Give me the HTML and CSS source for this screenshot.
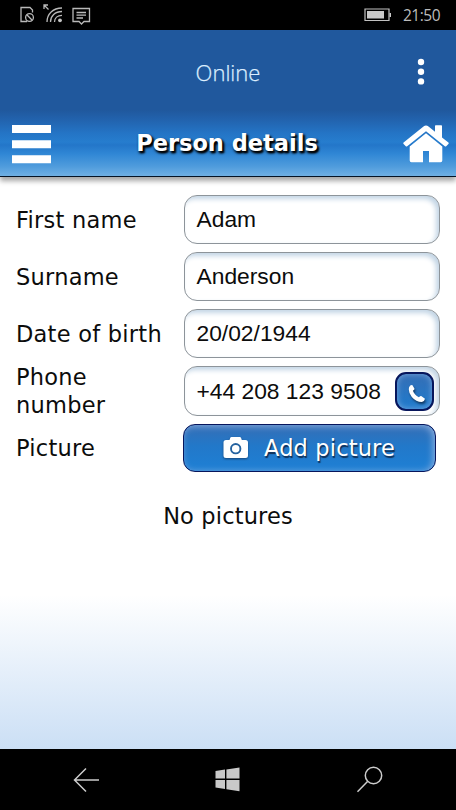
FILE: index.html
```html
<!DOCTYPE html>
<html lang="en">
<head>
<meta charset="utf-8">
<title>Person details</title>
<link rel="stylesheet" href="styles.css">
</head>
<body>
<div class="status">
  <svg class="status-icons" width="80" height="30" viewBox="0 0 80 30" fill="none" stroke="#b9b9b9" stroke-width="1.3">
    <path d="M7 21.500H1V7.500H10L12.500 10V12.500"/>
    <circle cx="9.500" cy="17.500" r="3.900"/><path d="M6.800 14.800L12.200 20.200"/>
    <path d="M24 9V5H28M24 5L28.500 9.500"/>
    <path d="M27 22C27 14 33 8 42 8M30.500 22C30.500 16 35 11.500 42 11.500M34.500 22C34.500 18 37.500 15.300 42 15.300"/>
    <circle cx="40" cy="20.300" r="1.900" fill="#c4c4c4" stroke="none"/>
    <path d="M53 8.500H69.500V21.500H64L61.500 24L59 21.500H53ZM56.500 12.500H66M56.500 15.200H66M56.500 18H63"/>
  </svg>
  <svg class="battery" width="28" height="14" viewBox="0 0 28 14"><path d="M1 1H25V12.500H1Z" fill="none" stroke="#c2c2c2" stroke-width="1.200"/><path d="M3 3H20V10.500H3ZM25.500 5H27V9H25.500Z" fill="#c9c9c9"/></svg>
  <span class="clock">21:50</span>
</div>
<header class="banner">
  <div class="online-row">
    <span class="online">Online</span>
    <svg class="dots" width="8" height="28" viewBox="0 0 8 28" fill="#fff"><circle cx="4" cy="4" r="3.200"/><circle cx="4" cy="13.700" r="3.200"/><circle cx="4" cy="23.400" r="3.200"/></svg>
  </div>
  <div class="title-row">
    <svg class="menu" width="39" height="39" viewBox="0 0 39 39" fill="#fff"><path d="M0 0H39V8H0ZM0 15.300H39V23.200H0ZM0 30.300H39V38.300H0Z"/></svg>
    <h1 class="title">Person details</h1>
    <svg class="home" width="46" height="39" viewBox="0 0 46 39" fill="#fff"><path d="M0.600 17.500L20.500 1.400Q23 -0.200 25.500 1.400L32 6.700V1Q32 0.300 32.700 0.300H38.300Q39 0.300 39 1V12.400L45.400 17.500Q46 18.200 45.400 19L43.200 21.300Q42.500 21.900 41.800 21.300L23 6.200L4.200 21.300Q3.500 21.900 2.800 21.300L0.600 19Q0 18.200 0.600 17.500Z"/><path d="M23 8.200L39.300 21.400V35.500Q39.300 37.200 37.600 37.200H26V26H20V37.200H8.500Q6.700 37.200 6.700 35.500V21.400Z"/></svg>
  </div>
</header>
<main class="content">
  <div class="form">
    <div class="label">First name</div><div class="field">Adam</div>
    <div class="label">Surname</div><div class="field">Anderson</div>
    <div class="label">Date of birth</div><div class="field">20/02/1944</div>
    <div class="label">Phone number</div>
    <div class="field">+44 208 123 9508
      <span class="call"><svg width="22" height="22" viewBox="0 0 22 22"><path d="M3.100 5.200Q4.200 2.700 6.500 3.200L8.500 6.800Q8.600 7.500 6.900 8.800Q8.500 13 12.900 15.300Q14.500 13.700 15.200 14L19 16.800Q18.500 19.500 15.800 20Q10 20 5.800 15Q1.900 10.200 3.100 5.200Z" fill="#fff"/></svg></span>
    </div>
    <div class="label">Picture</div>
    <div class="add">
      <svg width="26" height="24" viewBox="0 0 26 24"><path d="M3 4H6.500L7.200 2Q7.500 1 8.500 1H16.800Q17.800 1 18.100 2L18.800 4H22.500Q25 4 25 6.500V19.500Q25 22 22.500 22H3Q0.500 22 0.500 19.500V6.500Q0.500 4 3 4Z" fill="#fff"/><circle cx="12.700" cy="12.700" r="4.700" fill="#fff" stroke="#24629f" stroke-width="1.900"/></svg>
      <span class="add-text">Add picture</span>
    </div>
  </div>
  <p class="none">No pictures</p>
</main>
<nav class="nav">
  <svg width="27" height="26" viewBox="0 0 27 26" fill="none" stroke="#ccc" stroke-width="1.500"><path d="M26 13H1.500M13 1.500L1.500 13L13 24.500"/></svg>
  <svg class="windows" width="25" height="25" viewBox="0 0 25 25" fill="#c9c9c9"><path d="M0.500 4L10 2.600V11.500H0.500ZM11.400 2.400L24.500 0.400V11.500H11.400ZM0.500 13H10V22L0.500 20.600ZM11.400 13H24.500V24.300L11.400 22.300Z"/></svg>
  <svg width="27" height="27" viewBox="0 0 27 27" fill="none" stroke="#ccc" stroke-width="1.500"><circle cx="17.500" cy="9.500" r="8.200"/><path d="M11.500 15.500L1.500 25.700"/></svg>
</nav>
</body>
</html>
```
FILE: styles.css
```css
* { box-sizing: border-box; }
body {
  margin: 0;
  width: 456px;
  height: 810px;
  display: flex;
  flex-direction: column;
  overflow: hidden;
  background: #fff;
  font-family: "DejaVu Sans", sans-serif;
  color: #0c0c0c;
}
svg { display: block; flex: none; }
.status {
  height: 30px;
  flex: none;
  display: flex;
  align-items: center;
  background: #000;
  padding: 0 16px 0 20px;
}
.battery { margin-left: auto; margin-right: 11px; }
.clock {
  width: 37px;
  font: 15.5px/30px "Open Sans", sans-serif;
  letter-spacing: -0.5px;
  color: #bcbcbc;
  white-space: nowrap;
}
.banner {
  position: relative;
  z-index: 1;
  height: 147px;
  flex: none;
  border-bottom: 1px solid #051426;
  background: linear-gradient(#20589d 0, #20589d 80px, #2263ae 90px, #2474c5 103px, #267dce 112px, #2376c9 115px, #3087d5 124px, #4e9bdc 136px, #70b0e4 146px);
  box-shadow: 0 4px 5px rgba(0, 0, 0, 0.35);
}
.online-row {
  height: 86px;
  display: grid;
  grid-template-columns: 1fr auto 1fr;
  align-items: center;
  padding: 0 31px;
}
.online {
  grid-column: 2;
  margin-top: -2px;
  font: 300 22px/30px "Open Sans", sans-serif;
  color: #dceeff;
  -webkit-text-stroke: 0.25px #dceeff;
}
.dots { justify-self: end; margin-top: -2px; }
.title-row {
  height: 60px;
  display: flex;
  justify-content: space-between;
  padding: 9px 7px 0 12px;
}
.title {
  margin: 0;
  font-size: 22.5px;
  line-height: 36px;
  color: #fff;
  white-space: nowrap;
  text-shadow: 2px 2px 2px #000, 1px 2px 3px #000;
}
.content {
  flex: 1;
  padding: 18px 16px 0;
  background: linear-gradient(#fff 0, #fff 418px, #cbdff5 100%);
}
.form {
  display: grid;
  grid-template-columns: 168px 256px;
  grid-template-rows: 49px 49px 49px 50px 48px;
  row-gap: 8px;
  align-items: center;
}
.label {
  max-width: 150px;
  font-size: 22.5px;
  letter-spacing: 0.25px;
  line-height: 28px;
}
.field {
  height: 100%;
  display: flex;
  align-items: center;
  justify-content: space-between;
  padding: 0 5px 1px 11.5px;
  border: 1.500px solid #8d949a;
  border-radius: 13px;
  background: #fff;
  box-shadow: inset -3px 3px 5px #c3d5e5;
  font: 22.8px/28px "Liberation Sans", Arial, sans-serif;
  white-space: nowrap;
}
.call {
  width: 39px;
  height: 39px;
  margin-top: 1px;
  padding: 8px 0 0 9px;
  border: 2px solid #07165c;
  border-radius: 11px;
  background: linear-gradient(#356eb5, #1e7bcd);
  box-shadow: inset 0 0 6px #79a6db;
}
.call svg { filter: drop-shadow(1px 2px 1px #12385f); }
.add {
  width: 253px;
  height: 48px;
  margin-left: -1px;
  display: flex;
  align-items: center;
  padding-left: 39px;
  gap: 15px;
  border: 1.500px solid #07165c;
  border-radius: 12px;
  background: linear-gradient(#356eb5, #2278c9 45%, #1e80d5);
  box-shadow: inset -2px 1px 7px #8aaede;
}
.add svg { filter: drop-shadow(0 1px 1px #164577); }
.add-text {
  font-size: 22.5px;
  letter-spacing: 0.15px;
  line-height: 28px;
  color: #fff;
  text-shadow: 1px 2px 1px #102f55;
  white-space: nowrap;
}
.none {
  margin: 29px 0 0;
  font-size: 22.5px;
  letter-spacing: 0.15px;
  line-height: 30px;
  text-align: center;
}
.nav {
  height: 61px;
  flex: none;
  display: flex;
  align-items: center;
  justify-content: space-between;
  padding: 0 73px;
  background: #000;
}
.windows { margin-right: 2px; }
```
